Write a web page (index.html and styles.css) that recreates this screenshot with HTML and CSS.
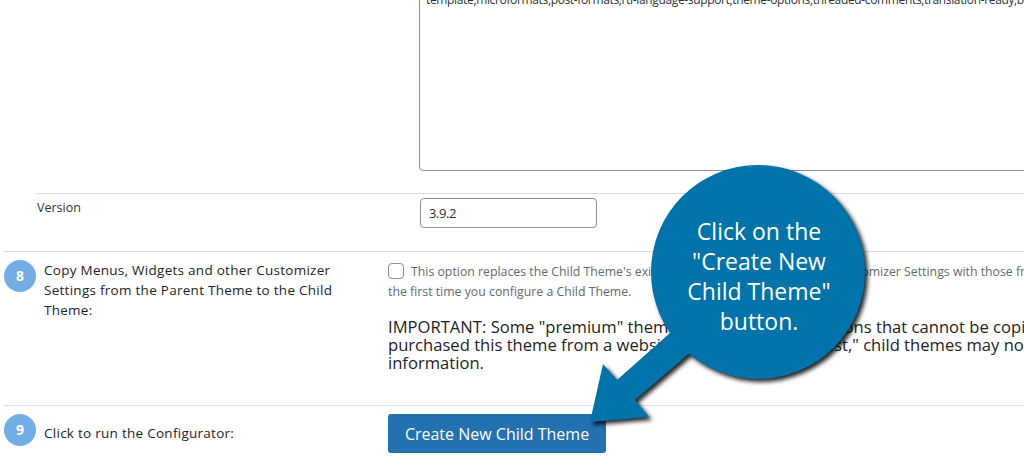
FILE: index.html
```html
<!DOCTYPE html>
<html lang="en">

<head>
  <meta charset="UTF-8">
  <meta name="viewport" content="width=device-width, initial-scale=1.0">
  <title>Child Theme Configurator</title>
  <link rel="stylesheet" href="styles.css">
</head>

<body>
  <div class="page">
    <div class="subrow tagsrow">
      <span></span>
      <textarea class="tagsbox" readonly wrap="off">template,microformats,post-formats,rtl-language-support,theme-options,threaded-comments,translation-ready,block-styles</textarea>
    </div>

    <div class="subrow versionrow">
      <label class="sublabel" for="versionInput">Version</label>
      <input class="versioninput" type="text" id="versionInput" value="3.9.2">
    </div>

    <div class="row copyrow">
      <span class="step">8</span>
      <div class="rowlabel">Copy Menus, Widgets and other Customizer Settings from the Parent Theme to the Child Theme:</div>
      <div class="rowbody">
        <p class="optiontext"><input class="check" type="checkbox">This option replaces the Child Theme's existing Menus, Widgets and other Customizer Settings with those from the Parent Theme.<br>the first time you configure a Child Theme.</p>
        <p class="important">IMPORTANT: Some "premium" themes add customizer options that cannot be copied. If you<br>purchased this theme from a website such as "Themeforest," child themes may not work.<br>information.</p>
      </div>
    </div>

    <div class="row runrow">
      <span class="step">9</span>
      <div class="rowlabel">Click to run the Configurator:</div>
      <div class="rowbody">
        <button class="runbutton" type="button">Create New Child Theme</button>
      </div>
    </div>
  </div>

  <div class="callout">
    <svg class="calloutshape" width="1024" height="456" viewBox="0 0 1024 456" aria-hidden="true">
      <g class="calloutfill">
        <circle cx="758" cy="272" r="107"></circle>
        <polygon points="670,333 617,380 603,364 590,422 649,417 635,400 692,351"></polygon>
      </g>
    </svg>
    <div class="callouttext">Click on the<br>"Create New<br>Child Theme"<br>button.</div>
  </div>
</body>

</html>
```

FILE: styles.css
```css
* {
  box-sizing: border-box;
}

body {
  margin: 0;
  background-color: #fff;
  color: #2c3338;
  font-family: "Open Sans", "Noto Sans", sans-serif;
  font-size: 13px;
  overflow: hidden;
}

.page {
  height: 456px;
  overflow: hidden;
  padding-left: 4px;
}

.subrow {
  display: grid;
  grid-template-columns: 383px 800px;
  margin-left: 33px;
}

.tagsrow {
  height: 193px;
}

.tagsbox {
  width: 800px;
  height: 191px;
  margin-top: -20px;
  margin-left: -1px;
  padding: 9px 6px 0;
  border: 1px solid #8c8f94;
  border-radius: 4px;
  font-family: inherit;
  font-size: 12px;
  letter-spacing: -0.35px;
  line-height: 20px;
  color: #2c3338;
  overflow: hidden;
  resize: none;
}

.versionrow {
  height: 58px;
  padding-top: 4px;
  border-top: 1px solid #dcdcde;
}

.sublabel {
  font-size: 12.5px;
  line-height: 20px;
}

.versioninput {
  width: 177px;
  height: 30px;
  padding: 0 8px;
  border: 1px solid #8c8f94;
  border-radius: 4px;
  font-family: inherit;
  font-size: 13px;
  letter-spacing: -0.4px;
  color: #2c3338;
}

.row {
  display: grid;
  grid-template-columns: 32px 336px 800px;
  column-gap: 8px;
  border-top: 1px solid #dcdcde;
}

.copyrow {
  height: 154px;
  padding-top: 8px;
}

.runrow {
  padding-top: 8px;
}

.step {
  width: 32px;
  height: 32px;
  border-radius: 50%;
  background-color: #72aee6;
  color: #fff;
  font-size: 14px;
  font-weight: 700;
  line-height: 32px;
  text-align: center;
}

.rowlabel {
  width: 292px;
  color: #1d2327;
  font-size: 13.5px;
  font-weight: 500;
  letter-spacing: 0.27px;
  line-height: 20px;
}

.runrow .rowlabel {
  padding-top: 9px;
}

.rowbody p {
  margin: 0;
}

.optiontext {
  padding-top: 2px;
  color: #646970;
  font-size: 12.3px;
  line-height: 20px;
  white-space: nowrap;
}

.check {
  width: 16px;
  height: 16px;
  margin: 0 7px 0 0;
  vertical-align: -3px;
  appearance: none;
  background-color: #fff;
  border: 1px solid #8c8f94;
  border-radius: 4px;
}

.rowbody .important {
  margin-top: 16px;
  color: #1d2327;
  font-size: 16.6px;
  font-weight: 500;
  line-height: 18px;
  white-space: nowrap;
}

.runbutton {
  width: 218px;
  height: 39px;
  padding: 0;
  border: none;
  border-radius: 3px;
  background-color: #2271b1;
  color: #fff;
  font-family: inherit;
  font-size: 16px;
}

.callout {
  position: absolute;
  left: 0;
  top: 0;
  width: 1024px;
  height: 456px;
  pointer-events: none;
}

.calloutshape {
  display: block;
}

.calloutfill {
  fill: #0073aa;
  filter: drop-shadow(3px 3px 2px rgba(0, 0, 0, 0.85));
}

.callouttext {
  position: absolute;
  left: 652px;
  top: 216px;
  width: 214px;
  color: #fff;
  font-size: 23px;
  line-height: 30px;
  text-align: center;
}
```
